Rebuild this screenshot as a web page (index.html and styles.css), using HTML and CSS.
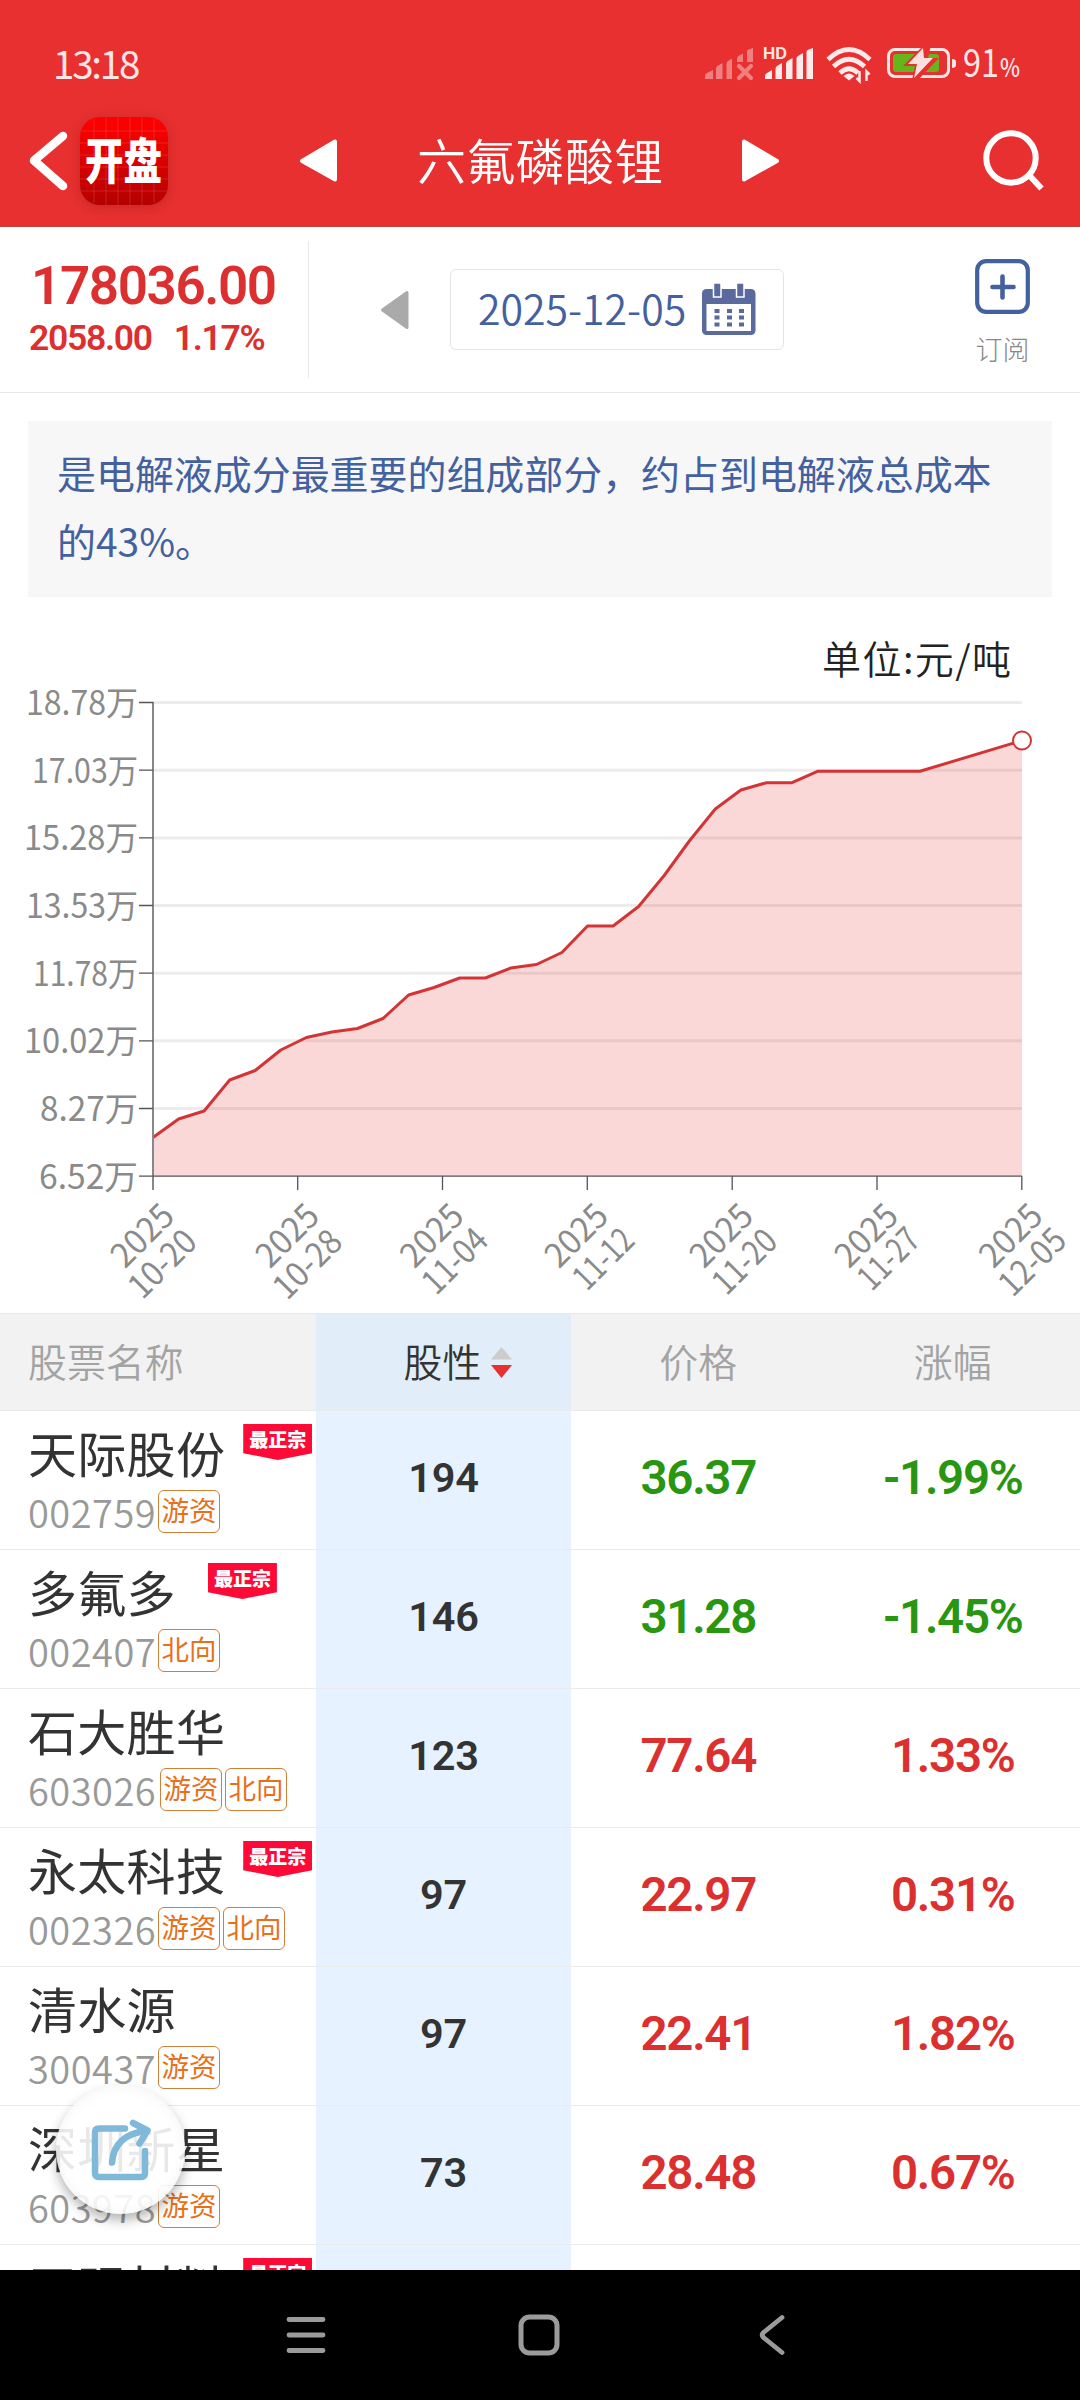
FILE: index.html
```html
<!DOCTYPE html>
<html lang="zh-CN">
<head>
<meta charset="utf-8">
<title>六氟磷酸锂</title>
<link rel="stylesheet" href="styles.css">
</head>
<body>
<div class="screen">
  <header class="header">
    <div class="status">
      <span class="clock">13:18</span>
      <svg class="status-icons" width="340" height="60" viewBox="695 35 340 60">
        <g fill="#fff" opacity=".38">
          <path d="M705 79v-3q0-2 2-3l6-3v9zM716 79V69q0-2 1.500-3l5-3v16zM726.500 79V64q0-2 1.500-3l4-2.500V79zM737 62v-3q0-2 1.500-3l4.500-2.500V62zM747 62V52q0-1.500 1-2.300L753 48v14z"/>
          <path d="M739 66l12 12M751 66l-12 12" stroke="#fff" stroke-width="4.200" stroke-linecap="round"/>
        </g>
        <g fill="#fff" fill-opacity=".9">
          <text class="hd" x="763" y="59" textLength="24" lengthAdjust="spacingAndGlyphs">HD</text>
          <path d="M765 79v-3q0-2 2-3l5-3v9zM775.500 79V69q0-2 1.500-3l5-3v16zM786 79V64q0-2 1.500-3l5-3v21zM796.500 79V58.500q0-1.500 1.500-2.500l5-3v26zM806.500 79V52q0-1.500 1.500-2.300l5-1.700v31z"/>
        </g>
        <g fill="none" stroke="#fff" stroke-opacity=".9" stroke-width="4.600">
          <path d="M828 59.500Q849 39.500 870 59.500M833.500 66.500Q849 52 864.500 66.500M840 73Q849 64.500 858 73"/>
        </g>
        <path d="M843.500 76q5.500-5 11 0l-5.500 4.500z" fill="#fff" fill-opacity=".9"/>
        <path d="M859.500 71v10l-3-3M866.500 81V71.500l3 3" fill="none" stroke="#fff" stroke-opacity=".9" stroke-width="2.500"/>
        <rect x="888.500" y="49.500" width="60" height="27" rx="6.500" fill="none" stroke="#fff" stroke-opacity=".88" stroke-width="3"/>
        <path d="M952 59q4 0 4 3v3q0 3-4 3z" fill="#fff" fill-opacity=".88"/>
        <rect x="893" y="54" width="46" height="18" rx="3" fill="#66b51c"/>
        <path d="M924 45L903 66h12l-3 14h6l21-22h-11l3-13z" fill="#e83030"/>
        <path d="M923 48L908 64h9l-3 14 19-20h-9z" fill="#fff" fill-opacity=".85"/>
        <text class="level" x="963" y="77" textLength="36" lengthAdjust="spacingAndGlyphs">91</text>
        <text class="percent" x="1000" y="77" textLength="20" lengthAdjust="spacingAndGlyphs">%</text>
      </svg>
    </div>
    <div class="titlebar">
      <svg class="back" width="44" height="64" viewBox="0 0 44 64"><path d="M37 7L8 31.500 37 57" fill="none" stroke="#fff" stroke-width="8.500" stroke-linecap="round" stroke-linejoin="round"/></svg>
      <svg class="logo" width="88" height="88" viewBox="0 0 88 88">
        <defs><linearGradient id="lg" x1="0" y1="0" x2="0" y2="1"><stop offset=".1" stop-color="#fb0000"/><stop offset="1" stop-color="#b40000"/></linearGradient></defs>
        <rect width="88" height="88" rx="20" fill="url(#lg)"/>
        <path d="M14 2v84M26 0v88M38 0v88M50 0v88M62 0v88M74 2v84M2 14h84M0 26h88M0 38h88M0 50h88M0 62h88M2 74h84" stroke="#fff" stroke-opacity=".13"/>
        <text class="logo-text" transform="translate(5 61.500) scale(1 1.270)" textLength="77">开盘</text>
      </svg>
      <svg class="prev" width="44" height="50" viewBox="0 0 44 50"><path d="M38 5.500v38L5 25z" fill="#fff" stroke="#fff" stroke-width="4" stroke-linejoin="round"/></svg>
      <h1 class="title">六氟磷酸锂</h1>
      <svg class="next" width="44" height="50" viewBox="0 0 44 50"><path d="M6 5.500v38L39 25z" fill="#fff" stroke="#fff" stroke-width="4" stroke-linejoin="round"/></svg>
      <svg class="search" width="64" height="64" viewBox="0 0 64 64"><circle cx="30" cy="29" r="24.700" fill="none" stroke="#fff" stroke-width="6"/><path d="M48 46l12.500 13.500" stroke="#fff" stroke-width="6"/></svg>
    </div>
  </header>

  <section class="quote">
    <div class="price">
      <div class="last">178036.00</div>
      <div class="change"><span>2058.00</span><span>1.17%</span></div>
    </div>
    <svg class="day-prev" width="30" height="40" viewBox="0 0 30 40"><path d="M27 2.500v35L2.500 20z" fill="#aaa" stroke="#aaa" stroke-width="3" stroke-linejoin="round"/></svg>
    <div class="date">
      <span>2025-12-05</span>
      <svg width="54" height="52" viewBox="0 0 54 52">
        <rect x="0" y="5" width="53.500" height="46" rx="4.500" fill="#5a6a9f"/>
        <path d="M4.500 20h44.500v27H4.500z" fill="#fff"/>
        <path d="M11.500-1h7.500v14h-7.500zM34.500-1H42v14h-7.500z" fill="#5a6a9f" stroke="#fff" stroke-width="1.500"/>
        <path d="M12.500 25h5v4h-5zM25 25h5v4h-5zM37 25h5v4h-5zM12.500 31.500h5v4h-5zM25 31.500h5v4h-5zM37 31.500h5v4h-5zM12.500 38.500h5v4h-5zM25 38.500h5v4h-5zM37 38.500h5v4h-5z" fill="#5a6a9f"/>
      </svg>
    </div>
    <div class="subscribe">
      <svg width="55" height="55" viewBox="0 0 55 55"><rect x="2.200" y="2.200" width="50.600" height="50.600" rx="9" fill="none" stroke="#43609f" stroke-width="4.200"/><path d="M27.500 17.500v21M17.500 28h21" stroke="#43609f" stroke-width="4.600" stroke-linecap="round"/></svg>
      <span>订阅</span>
    </div>
  </section>

  <p class="note">是电解液成分最重要的组成部分，约占到电解液总成本的43%。</p>

  <svg class="chart" width="1080" height="716" viewBox="0 597 1080 716">
    <text class="unit" x="822" y="674" textLength="189">单位:元/吨</text>
    <path class="grid" d="M153 702.500H1022M153 770.200H1022M153 837.900H1022M153 905.500H1022M153 973.200H1022M153 1040.800H1022M153 1108.500H1022"/>
    <path class="area" d="M153 1137.500L178.600 1119 204.100 1111 229.700 1080 255.200 1070.500 280.800 1050 306.400 1037.500 331.900 1032 357.500 1028.500 383 1018.500 408.600 995 434.100 987.500 459.700 978 485.300 978 510.800 968 536.400 964.500 561.900 952.500 587.500 926 613.100 926 638.600 906.500 664.200 875.500 689.700 840.500 715.300 809 740.900 790 766.400 782.700 792 782.700 817.500 771.300 920 771.300 1022 740.500V1176H153z"/>
    <path class="line" d="M153 1137.500L178.600 1119 204.100 1111 229.700 1080 255.200 1070.500 280.800 1050 306.400 1037.500 331.900 1032 357.500 1028.500 383 1018.500 408.600 995 434.100 987.500 459.700 978 485.300 978 510.800 968 536.400 964.500 561.900 952.500 587.500 926 613.100 926 638.600 906.500 664.200 875.500 689.700 840.500 715.300 809 740.900 790 766.400 782.700 792 782.700 817.500 771.300 920 771.300 1022 740.500"/>
    <path class="yaxis" d="M153 702V1190"/>
    <path class="axis" d="M139 702.500h14M139 770.200h14M139 837.900h14M139 905.500h14M139 973.200h14M139 1040.800h14M139 1108.500h14M139 1176.200H1022M297.700 1176v14M442.500 1176v14M587.300 1176v14M732.200 1176v14M877 1176v14M1021.800 1176v14"/>
    <circle class="marker" cx="1022" cy="740.500" r="9"/>
    <g class="tick">
      <text x="26" y="714.500" textLength="112" lengthAdjust="spacingAndGlyphs">18.78万</text>
      <text x="32" y="782.500" textLength="106" lengthAdjust="spacingAndGlyphs">17.03万</text>
      <text x="24" y="850" textLength="114" lengthAdjust="spacingAndGlyphs">15.28万</text>
      <text x="26" y="917.500" textLength="112" lengthAdjust="spacingAndGlyphs">13.53万</text>
      <text x="33" y="985.500" textLength="105" lengthAdjust="spacingAndGlyphs">11.78万</text>
      <text x="24" y="1053" textLength="114" lengthAdjust="spacingAndGlyphs">10.02万</text>
      <text x="40" y="1120.500" textLength="98" lengthAdjust="spacingAndGlyphs">8.27万</text>
      <text x="39" y="1188.500" textLength="99" lengthAdjust="spacingAndGlyphs">6.52万</text>
    </g>
    <g class="tick dates">
      <g transform="translate(176.500 1218) rotate(-45)"><text textLength="73" lengthAdjust="spacingAndGlyphs">2025</text></g>
      <g transform="translate(199 1244) rotate(-45)"><text textLength="80" lengthAdjust="spacingAndGlyphs">10-20</text></g>
      <g transform="translate(321.500 1218) rotate(-45)"><text textLength="73" lengthAdjust="spacingAndGlyphs">2025</text></g>
      <g transform="translate(344.500 1244) rotate(-45)"><text textLength="81" lengthAdjust="spacingAndGlyphs">10-28</text></g>
      <g transform="translate(466 1218) rotate(-45)"><text textLength="73" lengthAdjust="spacingAndGlyphs">2025</text></g>
      <g transform="translate(490 1242.500) rotate(-45)"><text textLength="76" lengthAdjust="spacingAndGlyphs">11-04</text></g>
      <g transform="translate(610.500 1218) rotate(-45)"><text textLength="73" lengthAdjust="spacingAndGlyphs">2025</text></g>
      <g transform="translate(636.500 1242.500) rotate(-45)"><text textLength="70" lengthAdjust="spacingAndGlyphs">11-12</text></g>
      <g transform="translate(755.500 1218) rotate(-45)"><text textLength="73" lengthAdjust="spacingAndGlyphs">2025</text></g>
      <g transform="translate(779.500 1243.500) rotate(-45)"><text textLength="75" lengthAdjust="spacingAndGlyphs">11-20</text></g>
      <g transform="translate(900.500 1218) rotate(-45)"><text textLength="73" lengthAdjust="spacingAndGlyphs">2025</text></g>
      <g transform="translate(922 1242) rotate(-45)"><text textLength="71" lengthAdjust="spacingAndGlyphs">11-27</text></g>
      <g transform="translate(1045 1218) rotate(-45)"><text textLength="73" lengthAdjust="spacingAndGlyphs">2025</text></g>
      <g transform="translate(1068.500 1242.500) rotate(-45)"><text textLength="79" lengthAdjust="spacingAndGlyphs">12-05</text></g>
    </g>
  </svg>

  <section class="table">
    <div class="row head">
      <div class="cell name">股票名称</div>
      <div class="cell hot">股性<svg width="21" height="34" viewBox="0 0 21 34"><path d="M10.500 2L21 14.500H0z" fill="#ccc"/><path d="M0 20h21L10.500 33z" fill="#e83030"/></svg></div>
      <div class="cell">价格</div>
      <div class="cell">涨幅</div>
    </div>
    <div class="row">
      <div class="cell name"><div class="stock">天际股份<span class="badge">最正宗</span></div><div class="meta"><span class="code">002759</span><span class="tag">游资</span></div></div>
      <div class="cell hot">194</div><div class="cell down">36.37</div><div class="cell down">-1.99%</div>
    </div>
    <div class="row">
      <div class="cell name"><div class="stock">多氟多<span class="badge far">最正宗</span></div><div class="meta"><span class="code">002407</span><span class="tag">北向</span></div></div>
      <div class="cell hot">146</div><div class="cell down">31.28</div><div class="cell down">-1.45%</div>
    </div>
    <div class="row">
      <div class="cell name"><div class="stock">石大胜华</div><div class="meta"><span class="code wide">603026</span><span class="tag">游资</span><span class="tag">北向</span></div></div>
      <div class="cell hot">123</div><div class="cell up">77.64</div><div class="cell up">1.33%</div>
    </div>
    <div class="row">
      <div class="cell name"><div class="stock">永太科技<span class="badge">最正宗</span></div><div class="meta"><span class="code">002326</span><span class="tag">游资</span><span class="tag">北向</span></div></div>
      <div class="cell hot">97</div><div class="cell up">22.97</div><div class="cell up">0.31%</div>
    </div>
    <div class="row">
      <div class="cell name"><div class="stock">清水源</div><div class="meta"><span class="code">300437</span><span class="tag">游资</span></div></div>
      <div class="cell hot">97</div><div class="cell up">22.41</div><div class="cell up">1.82%</div>
    </div>
    <div class="row">
      <div class="cell name"><div class="stock">深圳新星</div><div class="meta"><span class="code">603978</span><span class="tag">游资</span></div></div>
      <div class="cell hot">73</div><div class="cell up">28.48</div><div class="cell up">0.67%</div>
    </div>
    <div class="row">
      <div class="cell name"><div class="stock">天赐材料<span class="badge">最正宗</span></div></div>
      <div class="cell hot"></div><div class="cell"></div><div class="cell"></div>
    </div>
  </section>

  <nav class="navbar">
    <svg width="40" height="40" viewBox="0 0 40 40"><path d="M3 4.500h34M3 20h34M3 35.500h34" stroke="#9b9b9b" stroke-width="4.800" stroke-linecap="round"/></svg>
    <svg width="42" height="42" viewBox="0 0 42 42"><rect x="3" y="3" width="36" height="36" rx="8.500" fill="none" stroke="#9b9b9b" stroke-width="5"/></svg>
    <svg width="26" height="42" viewBox="0 0 26 42"><path d="M23 3.500L4.500 18.500q-2.500 2.500 0 5L23 38.500" fill="none" stroke="#9b9b9b" stroke-width="4.800" stroke-linecap="round"/></svg>
  </nav>

  <div class="share">
    <svg width="60" height="62" viewBox="0 0 60 62"><g fill="none" stroke="#7fb8d8" stroke-width="6.500" stroke-linecap="round" stroke-linejoin="round"><path d="M34 9.500H8q-4 0-4 4V54q0 4 4 4h42q4 0 4-4V32"/><path d="M21 43.500Q23.500 15.500 55 12"/><path d="M42 4L56.500 11.500 48.500 24.500"/></g></svg>
  </div>
</div>
</body>
</html>
```
FILE: styles.css
```css
* { box-sizing: border-box; }
body { margin: 0; }
.screen {
  position: relative;
  display: flex;
  flex-direction: column;
  width: 1080px;
  height: 2400px;
  overflow: hidden;
  background: #fff;
  color: #333;
  font-family: "Noto Sans CJK SC", sans-serif;
  white-space: nowrap;
}
svg { display: block; flex: none; overflow: visible; }

.header { height: 227px; background: #e83030; border-bottom: 1px solid #c24141; color: #fff; }
.status { display: flex; align-items: flex-start; height: 95px; padding: 35px 45px 0 53px; justify-content: space-between; }
.clock { font-size: 38.500px; line-height: 54px; letter-spacing: -2.200px; opacity: .88; }
.hd { font: 700 16px "Inter", sans-serif; }
.level { font-size: 38px; fill: #fff; fill-opacity: .9; }
.percent { font-size: 25px; font-weight: 500; fill: #fff; fill-opacity: .9; }
.titlebar { display: flex; align-items: center; height: 132px; padding: 0 35px 0 26px; }
.logo { margin-left: 10px; border-radius: 20px; box-shadow: 0 2px 12px rgba(120, 20, 20, .3); }
.logo-text { font-size: 38.500px; font-weight: 900; fill: #fff; }
.prev { margin-left: 129px; }
.title { margin: 0 0 4px 76px; width: 249px; font-size: 49px; line-height: 72px; font-weight: 350; letter-spacing: .3px; }
.next { margin-left: 72px; }
.search { margin-left: auto; }

.quote { display: flex; align-items: center; height: 166px; border-bottom: 1px solid #e8e8e8; }
.price { width: 309px; height: 137px; padding: 17px 0 0 31px; border-right: 1px solid #e8e8e8; color: #dc3030; font-family: Roboto, sans-serif; font-weight: 600; }
.last { font-size: 53px; line-height: 56px; letter-spacing: -1.400px; }
.change { display: flex; gap: 22px; margin-left: -2px; font-size: 35.500px; line-height: 48px; letter-spacing: -1.300px; }
.day-prev { margin-left: 71px; }
.date { display: flex; align-items: center; gap: 13px; width: 334px; height: 81px; margin-left: 40px; padding-left: 27px; border: 1px solid #e4e4e4; border-radius: 6px; color: #43609f; font-size: 41px; font-weight: 350; }
.date span { margin-bottom: 5px; width: 211px; }
.subscribe { display: flex; flex-direction: column; align-items: center; gap: 13px; margin: 11px 0 0 191px; color: #888; font-size: 27px; line-height: 44px; font-weight: 300; }

.note { margin: 28px 28px 0; height: 176px; padding: 17px 29px 0; background: #f7f7f8; color: #43609f; font-size: 38.950px; line-height: 68px; font-weight: 400; white-space: normal; text-spacing-trim: space-all; }

.unit { font-size: 39px; font-weight: 350; fill: #222; }
.grid { stroke: #ececec; stroke-width: 3; }
.area { fill: rgba(232, 48, 48, .19); }
.line { fill: none; stroke: #d23535; stroke-width: 3; stroke-linejoin: round; }
.yaxis { stroke: #888; stroke-width: 2; }
.axis { fill: none; stroke: #555; stroke-width: 1.300; }
.marker { fill: #fff; stroke: #d23535; stroke-width: 2; }
.tick { font-size: 33.500px; font-weight: 400; fill: #8a8a8a; }
.dates { text-anchor: end; }

.table { flex: 1; min-height: 0; overflow: hidden; border-top: 1px solid #e8e8e8; }
.row { display: grid; grid-template-columns: 316px 255px 254.500px 254.500px; height: 139px; border-bottom: 1px solid #ebebeb; }
.cell { display: flex; align-items: center; justify-content: center; padding: 0 0 5px; font: 600 47.500px Roboto, sans-serif; letter-spacing: -1.300px; }
.hot { background: #e6f2ff; font-size: 41.500px; letter-spacing: -.2px; }
.name { display: block; padding: 13px 0 0 28px; font: 400 49px "Noto Sans CJK SC", sans-serif; letter-spacing: .3px; }
.up { color: #dc3030; }
.down { color: #289610; }
.head { height: 97px; background: #f2f2f2; }
.head .cell { display: flex; align-items: center; padding: 0 0 5px; font: 350 38.900px "Noto Sans CJK SC", sans-serif; letter-spacing: 0; color: #a3a3a3; }
.head .name { justify-content: flex-start; padding-left: 28px; }
.head .hot { gap: 10px; padding-left: 29px; background: #e1edf8; color: #333; }
.head svg { margin-top: 4px; }
.stock { display: flex; align-items: flex-start; height: 60px; line-height: 56px; }
.badge { flex: none; width: 69px; height: 36px; margin-left: 18px; background: #ff0a37; clip-path: polygon(0 0, 100% 0, 100% 81%, 50% 100%, 0 81%); color: #fff; font-size: 19px; font-weight: 900; line-height: 30px; letter-spacing: 0; text-align: center; }
.badge.far { margin-left: 32px; }
.meta { display: flex; align-items: center; gap: 3px; height: 43px; margin-top: 6px; }
.code { width: 127px; font-size: 38px; font-weight: 350; line-height: 43px; color: #999; letter-spacing: .5px; }
.wide { width: 129px; }
.tag { width: 62px; height: 43px; border: 1.500px solid #d08038; border-radius: 6px; color: #e8701a; font-size: 27.500px; font-weight: 400; line-height: 37px; letter-spacing: 0; text-align: center; }

.navbar { display: flex; align-items: center; height: 130px; padding: 0 0 0 286px; background: #000; }
.navbar svg:nth-child(2) { margin-left: 192px; }
.navbar svg:nth-child(3) { margin-left: 199px; }

.share { position: absolute; left: 56px; top: 2085px; display: flex; align-items: center; justify-content: center; width: 129px; height: 129px; border-radius: 50%; background: rgba(255, 255, 255, .89); box-shadow: 0 6px 12px rgba(0, 0, 0, .3), inset 0 0 14px rgba(0, 0, 0, .05); }
```
